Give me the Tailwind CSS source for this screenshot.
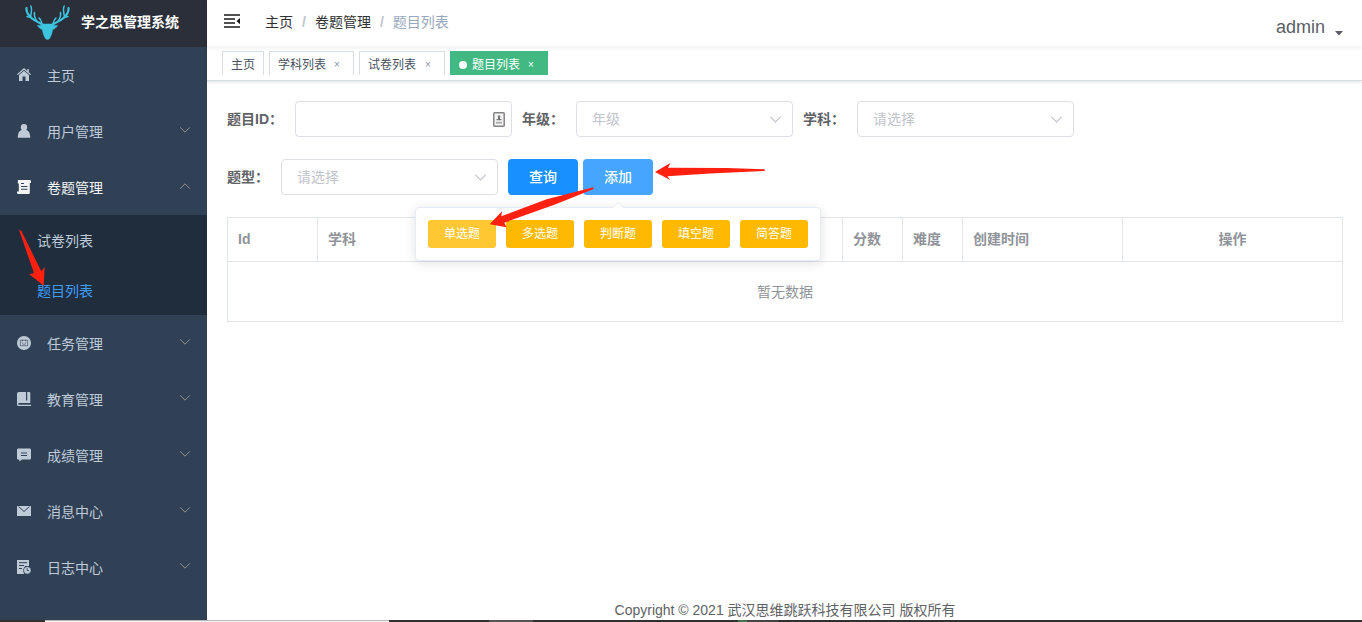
<!DOCTYPE html>
<html lang="zh-CN">
<head>
<meta charset="utf-8">
<title>学之思管理系统</title>
<script src="https://cdn.jsdelivr.net/npm/@tailwindcss/browser@4"></script>
</head>
<body class="bg-white">
<svg class="hidden">
  <symbol id="down" viewBox="0 0 12 12"><path d="M1.200 3.400 6 8.200l4.800-4.800" fill="none" stroke="currentColor" stroke-width="1"/></symbol>
</svg>
<div class="relative flex h-[622px] w-[1362px] flex-col overflow-hidden bg-white font-['Liberation_Sans','Noto_Sans_CJK_SC',sans-serif] text-sm text-[#606266]">
  <div class="flex h-[620px]">
    <!-- Sidebar -->
    <aside class="flex w-[207px] shrink-0 flex-col bg-[#304156] text-[#bfcbd9]">
      <div class="flex h-[47px] shrink-0 items-center bg-[#2b2f3a] pl-[25px] pb-[3px]">
        <svg class="h-[36px] w-[45px]" viewBox="0 0 45 36" fill="none" stroke="#3cc3de" stroke-linecap="round" stroke-linejoin="round">
          <path d="M19.500 21.500C15 19 9 16.500 6 13.500 3 10.500 1 7.500 1.500 4M25.500 21.500c4.500-2.500 10.500-5 13.500-8 3-3 5-6 4.500-9.500" stroke-width="2.200"/>
          <path d="M5.500 13C6 9 7.500 5.500 5.800 2M12 17.500c-1.500-3-3.500-5-2.500-9M17 20.500c-.5-3-1-5-3-6.500M6 13.500l-4-1M39.500 13C39 9 37.500 5.500 39.200 2M33 17.500c1.500-3 3.500-5 2.500-9M28 20.500c.5-3 1-5 3-6.500M39 13.500l4-1" stroke-width="1.500"/>
          <path d="M12.500 21.300c2.500.5 4.500 0 6.500-1.300h7c2 1.300 4 1.800 6.500 1.300-1.200 2.500-2.800 3.700-4.800 4.200-.5 3-1.500 6.500-3.200 9.200-1 .9-3 .9-4 0-1.700-2.700-2.700-6.200-3.200-9.200-2-.5-3.600-1.700-4.800-4.200z" fill="#3cc3de" stroke-width=".5"/>
        </svg>
        <span class="ml-[11px] pb-[1px] text-sm font-bold text-white">学之思管理系统</span>
      </div>
      <div class="flex h-14 shrink-0 items-center pl-[17px]">
        <svg class="size-[14px]" viewBox="0 0 14 14" fill="currentColor"><path d="M7 0 0 6.200l.8.9L7 1.700l6.200 5.400.8-.9-2.200-2V1h-1.500v1.900z"/><path d="M7 2.800 2 7.100V13h3.500V8.500h3V13H12V7.100z"/></svg>
        <span class="ml-4 pt-0.5">主页</span>
      </div>
      <div class="flex h-14 shrink-0 items-center pl-[17px]">
        <svg class="size-[14px]" viewBox="0 0 14 14" fill="currentColor"><circle cx="7" cy="3.300" r="3.200"/><path d="M4.500 6h5c2.500 1 3.600 3 3.700 7.700H.8C.9 9 2 7 4.500 6z"/></svg>
        <span class="ml-4 pt-0.5">用户管理</span>
        <svg class="mr-4 mb-[2px] ml-auto size-3 text-[#909399]"><use href="#down"/></svg>
      </div>
      <div class="flex h-14 shrink-0 items-center pl-[17px] text-[#f4f4f5]">
        <svg class="size-[14px]" viewBox="0 0 14 14" fill="currentColor"><path d="M1.200 0h11.600c.8 0 1.200.6 1.200 1.300V3h-1.200v9.500c0 1-.6 1.500-1.500 1.500H1.300C.5 14 0 13.400 0 12.500v-1h1.800V3.500H.8V1z"/><path d="M4 3.500h3M4 6.500h6.500M4 9.300h6.500" stroke="#304156" stroke-width="1.100"/></svg>
        <span class="ml-4 pt-0.5">卷题管理</span>
        <svg class="mr-4 mb-[2px] ml-auto size-3 rotate-180 text-[#909399]"><use href="#down"/></svg>
      </div>
      <div class="flex h-[100px] shrink-0 flex-col bg-[#1f2d3d] pl-[37px]">
        <div class="flex h-[50px] items-center pt-0.5">试卷列表</div>
        <div class="flex h-[50px] items-center pt-0.5 text-[#409eff]">题目列表</div>
      </div>
      <div class="flex h-14 shrink-0 items-center pl-[17px]">
        <svg class="size-[14px]" viewBox="0 0 14 14" fill="none"><circle cx="7" cy="7" r="7" fill="currentColor"/><path d="M3.300 4.200h7.400v5.500H3.300zM5.200 3.500v1.500M8.800 3.500v1.500" stroke="#304156" stroke-width=".6"/><path d="M4.800 6h1M8.200 6h1M5 7.600q2 1.500 4 0" stroke="#304156" stroke-width=".6"/></svg>
        <span class="ml-4 pt-0.5">任务管理</span>
        <svg class="mr-4 mb-[2px] ml-auto size-3 text-[#909399]"><use href="#down"/></svg>
      </div>
      <div class="flex h-14 shrink-0 items-center pl-[17px]">
        <svg class="size-[14px]" viewBox="0 0 14 14" fill="currentColor"><path d="M2 0h7v8.500h1.200V0H12c.8 0 1.300.5 1.300 1.300V11H2c-.5 0-.8.2-.8.8 0 .7.300 1 .8 1h12V14H1.500C.5 14 0 13.400 0 12.500V2C0 .7.700 0 2 0z"/></svg>
        <span class="ml-4 pt-0.5">教育管理</span>
        <svg class="mr-4 mb-[2px] ml-auto size-3 text-[#909399]"><use href="#down"/></svg>
      </div>
      <div class="flex h-14 shrink-0 items-center pl-[17px]">
        <svg class="size-[14px]" viewBox="0 0 14 14" fill="currentColor"><path d="M1.500.5h11c1 0 1.500.6 1.500 1.500v8c0 1-.6 1.500-1.500 1.500H5L2.300 13.600v-2.100h-.8C.5 11.500 0 11 0 10V2C0 1 .6.5 1.500.5z"/><path d="M4 5h6M4 7.500h6" stroke="#304156" stroke-width="1"/></svg>
        <span class="ml-4 pt-0.5">成绩管理</span>
        <svg class="mr-4 mb-[2px] ml-auto size-3 text-[#909399]"><use href="#down"/></svg>
      </div>
      <div class="flex h-14 shrink-0 items-center pl-[17px]">
        <svg class="size-[14px]" viewBox="0 0 14 14" fill="currentColor"><path d="M0 2h14v10H0z"/><path d="m1.500 2.500 5.500 5 5.500-5" stroke="#304156" stroke-width="1" fill="none"/></svg>
        <span class="ml-4 pt-0.5">消息中心</span>
        <svg class="mr-4 mb-[2px] ml-auto size-3 text-[#909399]"><use href="#down"/></svg>
      </div>
      <div class="flex h-14 shrink-0 items-center pl-[17px]">
        <svg class="size-[14px]" viewBox="0 0 14 14" fill="none"><path d="M0 0h12v6H8l-2 4 1 4H0z" fill="currentColor"/><path d="M2 2.700h8M2 5.500h5M2 8.500h3" stroke="#304156" stroke-width="1"/><circle cx="10.300" cy="10.300" r="3.600" fill="currentColor" stroke="#304156" stroke-width=".4"/><path d="M10.200 8.200v2.500H12" stroke="#304156" stroke-width=".9"/></svg>
        <span class="ml-4 pt-0.5">日志中心</span>
        <svg class="mr-4 mb-[2px] ml-auto size-3 text-[#909399]"><use href="#down"/></svg>
      </div>
    </aside>

    <main class="flex min-w-0 flex-1 flex-col">
      <!-- Navbar -->
      <header class="flex h-[47px] shrink-0 items-center pl-[17px] shadow-[0_1px_4px_rgba(0,21,41,0.08)]">
        <svg class="mb-[5px] h-[14px] w-4" viewBox="0 0 16 14"><path d="M0 1h16M0 5h11M0 9h11M0 13h16" stroke="#1a1a1a" stroke-width="1.700"/><path d="M16 4v6.200L12.500 7z" fill="#1a1a1a"/></svg>
        <nav class="ml-[25px] flex pb-1 text-[#303133]">
          <span>主页</span><span class="mx-[9px] font-bold text-[#c0c4cc]">/</span>
          <span>卷题管理</span><span class="mx-[9px] font-bold text-[#c0c4cc]">/</span>
          <span class="text-[#97a8be]">题目列表</span>
        </nav>
        <div class="mr-[19px] ml-auto flex items-center">
          <span class="pt-[6px] text-lg text-[#5a5e66]">admin</span>
          <svg class="mt-[19px] ml-[10px] h-[5px] w-2" viewBox="0 0 8 5"><path d="M0 0h8L4 4.500z" fill="#5a5e66"/></svg>
        </div>
      </header>
      <!-- Open tabs -->
      <div class="flex h-[34px] shrink-0 gap-[5px] border-b border-[#d8dce5] pt-1 pl-[15px] text-xs text-[#495060] shadow-[0_1px_3px_0_rgba(0,0,0,0.12),0_0_3px_0_rgba(0,0,0,0.04)]">
        <div class="flex h-6 w-[42px] items-center border border-b-0 border-[#d8dce5] pt-[2px] pl-2">主页</div>
        <div class="flex h-6 w-[85px] items-center border border-b-0 border-[#d8dce5] pt-[2px] pl-2">学科列表<span class="ml-2 text-[10px] text-[#8a92a0]">×</span></div>
        <div class="flex h-6 w-[86px] items-center border border-b-0 border-[#d8dce5] pt-[2px] pl-2">试卷列表<span class="ml-[9px] text-[10px] text-[#8a92a0]">×</span></div>
        <div class="flex h-6 w-[98px] items-center bg-[#42b983] pt-[4px] pl-[9px] text-white"><i class="mr-[5px] size-2 rounded-full bg-white"></i>题目列表<span class="ml-2 text-[10px]">×</span></div>
      </div>
      <!-- Filters -->
      <div class="flex flex-1 flex-col pt-5 pr-[19px] pl-5">
        <div class="flex h-9 items-center">
          <label class="flex w-[68px] font-bold whitespace-nowrap">题目ID<span class="[text-spacing-trim:space-all]">：</span></label>
          <div class="flex h-9 w-[217px] items-center justify-end rounded border border-[#dcdfe6] pr-[6px]">
            <svg class="h-[15px] w-3" viewBox="0 0 12 15"><rect x=".8" y=".8" width="10.400" height="13.400" rx=".8" fill="#f4f4f4" stroke="#858585" stroke-width="1.500"/><circle cx="6" cy="4.500" r="1.200" fill="#777"/><path d="M5 5h2v2h1.500v1.200h-5V7H5z" fill="#777"/><path d="M3 9.800h6v1.800H3z" fill="#aaa"/></svg>
          </div>
          <label class="ml-[10px] flex w-[54px] font-bold">年级<span class="[text-spacing-trim:space-all]">：</span></label>
          <div class="flex h-9 w-[217px] items-center justify-between rounded border border-[#dcdfe6] pr-[10px] pl-[15px] text-[#c0c4cc]">年级<svg class="size-[13px]"><use href="#down"/></svg></div>
          <label class="ml-[10px] flex w-[54px] font-bold">学科<span class="[text-spacing-trim:space-all]">：</span></label>
          <div class="flex h-9 w-[217px] items-center justify-between rounded border border-[#dcdfe6] pr-[10px] pl-[15px] text-[#c0c4cc]">请选择<svg class="size-[13px]"><use href="#down"/></svg></div>
        </div>
        <div class="mt-[22px] flex h-9 items-center">
          <label class="flex w-[54px] font-bold">题型<span class="[text-spacing-trim:space-all]">：</span></label>
          <div class="flex h-9 w-[217px] items-center justify-between rounded border border-[#dcdfe6] pr-[10px] pl-[15px] text-[#c0c4cc]">请选择<svg class="size-[13px]"><use href="#down"/></svg></div>
          <button class="ml-[10px] h-9 w-[70px] rounded bg-[#1890ff] font-medium text-white">查询</button>
          <button class="ml-[5px] h-9 w-[70px] rounded bg-[#46a6ff] font-medium text-white">添加</button>
        </div>
        <!-- Question table -->
        <div class="mt-[22px] h-[105px] border border-[#dfe6ec] text-[#909399]">
          <div class="flex h-11 border-b border-[#dfe6ec] font-bold *:flex *:items-center *:border-r *:border-[#dfe6ec] *:pb-[2px] *:pl-[10px]">
            <div class="w-[90px]">Id</div>
            <div class="w-[120px]">学科</div>
            <div class="w-[405px]"></div>
            <div class="w-[60px]">分数</div>
            <div class="w-[60px]">难度</div>
            <div class="w-[160px]">创建时间</div>
            <div class="flex-1 justify-center border-r-0! pl-0!">操作</div>
          </div>
          <div class="flex h-[60px] items-center justify-center">暂无数据</div>
        </div>
        <footer class="mt-auto flex h-5 items-center justify-center">Copyright © 2021 武汉思维跳跃科技有限公司 版权所有</footer>
      </div>
    </main>
  </div>
  <div class="flex h-[2px] bg-[#303030]">
    <div class="w-[45px]"></div>
    <div class="w-[344px] border-t border-[#b8b8b8] bg-[#f4f4f4]"></div>
    <div class="w-[100px]"></div>
    <div class="w-[44px] bg-[#555]"></div>
    <div class="w-[205px]"></div>
    <div class="w-[9px] bg-[#44774a]"></div>
    <div class="w-[31px] bg-[#444]"></div>
  </div>

  <!-- Question type popover -->
  <div class="absolute top-[207px] left-[415px] flex h-[54px] w-[406px] gap-[10px] rounded border border-[#e6ebf5] bg-white p-3 text-xs text-white shadow-[0_2px_12px_0_rgba(0,0,0,0.12)]">
    <svg class="absolute -top-[6px] left-[196px] h-[7px] w-3" viewBox="0 0 12 7"><path d="M0 6.500 6 .5l6 6V7H0z" fill="#fff"/><path d="m0 6 6-5.500L12 6" fill="none" stroke="#e6ebf5"/></svg>
    <button class="h-7 w-[68px] rounded-[3px] bg-[#ffc833]">单选题</button>
    <button class="h-7 w-[68px] rounded-[3px] bg-[#ffba00]">多选题</button>
    <button class="h-7 w-[68px] rounded-[3px] bg-[#ffba00]">判断题</button>
    <button class="h-7 w-[68px] rounded-[3px] bg-[#ffba00]">填空题</button>
    <button class="h-7 w-[68px] rounded-[3px] bg-[#ffba00]">简答题</button>
  </div>
  <!-- Pointer arrows -->
  <svg class="pointer-events-none absolute inset-0 h-[622px] w-[1362px]" viewBox="0 0 1362 622" fill="#ff2010">
    <path d="M19 229.700 21.300 230.700 41.300 271.300 44.700 267 43.700 285.700 29 274l5-.7z"/>
    <path d="M655 172 670.300 163 668 167.700 726.700 168 764.700 169.300V171L710 173.500 667.300 176.300 670.300 180z"/>
    <path d="M489.700 224.300 502 211.300 501.300 216.300 546.700 199.300 593.300 187.300 593.700 189 555 204.500 504.300 222.700 506.700 227.300z"/>
  </svg>
</div>
</body>
</html>
